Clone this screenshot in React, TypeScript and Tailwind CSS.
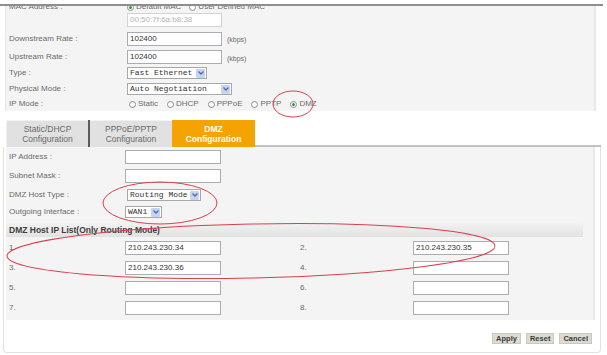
import React from "react";

const TextBox = ({ value = "", w = "w-[96px]", dim = false }: { value?: string; w?: string; dim?: boolean }) => (
  <div
    className={`${w} h-[14px] bg-white border flex items-center pl-[2px] text-[8px] ${
      dim ? "border-[#d4d4d4] text-[#b4b4b4]" : "border-[#a9adb3] text-[#333]"
    }`}
  >
    {value}
  </div>
);

const Select = ({ value, w }: { value: string; w: string }) => (
  <div className={`${w} h-[12px] bg-white border border-[#a8a8a8] flex items-center justify-between pl-[2px] pr-[1px]`}>
    <span className="font-['Liberation_Mono',monospace] text-[8px] text-[#333] leading-none">{value}</span>
    <span className="w-[9px] h-[9px] bg-[#c6d4f2] rounded-[1px] flex items-center justify-center">
      <svg width="6" height="4" viewBox="0 0 6 4">
        <path d="M0.5 0.5 L3 3 L5.5 0.5" stroke="#4a6aa8" strokeWidth="1.3" fill="none" />
      </svg>
    </span>
  </div>
);

const Radio = ({ label, on = false }: { label: string; on?: boolean }) => (
  <span className="flex items-center gap-[2px]">
    <span className="w-[7px] h-[7px] rounded-full border border-[#8e8e8e] bg-white flex items-center justify-center">
      {on && <span className="w-[3px] h-[3px] rounded-full bg-[#2f9a3a]" />}
    </span>
    <span>{label}</span>
  </span>
);

const Row = ({ label, h, children, mt = "" }: { label: string; h: string; mt?: string; children: React.ReactNode }) => (
  <div className={`flex items-center ${h} ${mt}`}>
    <span className="w-[118px] shrink-0">{label}</span>
    {children}
  </div>
);

const Row2 = ({ label, h, children }: { label: string; h: string; children: React.ReactNode }) => (
  <div className={`flex items-center ${h}`}>
    <span className="w-[116px] shrink-0">{label}</span>
    {children}
  </div>
);

const IpRow = ({ a, b, va = "", vb = "" }: { a: string; b: string; va?: string; vb?: string }) => (
  <div className="flex items-center h-[20px]">
    <span className="w-[116px] shrink-0">{a}</span>
    <TextBox value={va} />
    <span className="ml-[79px] w-[113px] shrink-0">{b}</span>
    <TextBox value={vb} />
  </div>
);

export default function App() {
  return (
    <div className="relative w-[607px] h-[355px] overflow-hidden bg-white font-['Liberation_Sans',Arial,sans-serif] text-[8px] text-[#6a6a6a]">
      <div className="h-[4px]" />
      <div className="w-[603px] border-t-2 border-[#8e8e8e]" />

      {/* WAN settings panel */}
      <div className="ml-[5px] w-[591px] h-[105px] bg-[#f4f4f4] border-r-2 border-l border-[#e8e8e8] overflow-hidden pl-[3px]">
        <Row label="MAC Address :" h="h-[12px]" mt="-mt-[5px]">
          <div className="flex items-center gap-[8px]">
            <Radio label="Default MAC" on />
            <Radio label="User Defined MAC" />
          </div>
        </Row>
        <Row label="" h="h-[14px]">
          <TextBox value="00:50:7f:6a:b8:38" w="w-[95px]" dim />
        </Row>
        <Row label="Downstream Rate :" h="h-[21px]" mt="mt-[1px]">
          <TextBox value="102400" w="w-[95px]" />
          <span className="ml-[5px] mt-[4px] text-[7px]">(kbps)</span>
        </Row>
        <Row label="Upstream Rate :" h="h-[16px]">
          <TextBox value="102400" w="w-[95px]" />
          <span className="ml-[5px] mt-[4px] text-[7px]">(kbps)</span>
        </Row>
        <Row label="Type :" h="h-[16px]">
          <Select value="Fast Ethernet" w="w-[80px]" />
        </Row>
        <Row label="Physical Mode :" h="h-[16px]">
          <Select value="Auto Negotiation" w="w-[105px]" />
        </Row>
        <Row label="IP Mode :" h="h-[14px]">
          <div className="flex items-center gap-[9px] ml-[2px]">
            <Radio label="Static" />
            <Radio label="DHCP" />
            <Radio label="PPPoE" />
            <Radio label="PPTP" />
            <Radio label="DMZ" on />
          </div>
        </Row>
      </div>

      {/* Tabbed section */}
      <div className="ml-[3px] w-[598px] mt-[9px]">
        <div className="flex h-[27px] pl-[3px]">
          <div className="w-[82px] bg-[#e1e1e1] border-t border-l border-[#f2f2f2] flex flex-col items-center justify-center leading-[10px] text-[8.5px]">
            <span>Static/DHCP</span>
            <span>Configuration</span>
          </div>
          <div className="w-[2px] bg-[#5c5c5c]" />
          <div className="w-[82px] bg-[#e1e1e1] border-t border-[#f2f2f2] flex flex-col items-center justify-center leading-[10px] text-[8.5px]">
            <span>PPPoE/PPTP</span>
            <span>Configuration</span>
          </div>
          <div className="w-[83px] bg-[#f5a300] flex flex-col items-center justify-center leading-[10px] text-[8.5px] font-bold text-white">
            <span>DMZ</span>
            <span>Configuration</span>
          </div>
          <div className="flex-1 border-b-2 border-[#c2c2c2]" />
        </div>

        <div className="h-[206px] border-x border-b border-[#e0e0e0] rounded-b-[4px] pl-[2px]">
          <div className="w-[589px] h-[173px] bg-[#f4f4f4] border-r-2 border-[#e9e9e9] pl-[3px]">
            <Row2 label="IP Address :" h="h-[19px]">
              <TextBox />
            </Row2>
            <Row2 label="Subnet Mask :" h="h-[20px]">
              <TextBox />
            </Row2>
            <Row2 label="DMZ Host Type :" h="h-[18px]">
              <span className="ml-[2px]">
                <Select value="Routing Mode" w="w-[74px]" />
              </span>
            </Row2>
            <Row2 label="Outgoing Interface :" h="h-[16px]">
              <Select value="WAN1" w="w-[37px]" />
            </Row2>

            <div className="-ml-[3px] mt-[3px] w-[577px] h-[14px] bg-gradient-to-b from-[#f2f2f2] to-[#e2e2e2] flex items-center pl-[3px] text-[8.5px] font-bold text-[#3e3e3e]">
              DMZ Host IP List(Only Routing Mode)
            </div>

            <div className="mt-[1px]">
              <IpRow a="1." b="2." va="210.243.230.34" vb="210.243.230.35" />
              <IpRow a="3." b="4." va="210.243.230.36" />
              <IpRow a="5." b="6." />
              <IpRow a="7." b="8." />
            </div>
          </div>

          <div className="flex justify-end gap-[5px] pr-[8px] mt-[13px]">
            {["Apply", "Reset", "Cancel"].map((b) => (
              <div
                key={b}
                className="h-[11px] px-[3px] bg-[#dcdcd3] border border-[#c9c9c0] flex items-center text-[7.5px] font-bold text-[#3a3a3a]"
              >
                {b}
              </div>
            ))}
          </div>
        </div>
      </div>

      {/* red annotation ellipses */}
      <svg className="absolute left-0 top-0 pointer-events-none" width="607" height="355">
        <ellipse cx="293" cy="104" rx="20" ry="13" fill="none" stroke="#d9404c" strokeWidth="1" />
        <ellipse cx="160" cy="203" rx="57" ry="21" fill="none" stroke="#d9404c" strokeWidth="1" />
        <ellipse
          cx="251"
          cy="251"
          rx="244"
          ry="27"
          fill="none"
          stroke="#d9404c"
          strokeWidth="1"
          transform="rotate(-1.2 251 251)"
        />
      </svg>
    </div>
  );
}
